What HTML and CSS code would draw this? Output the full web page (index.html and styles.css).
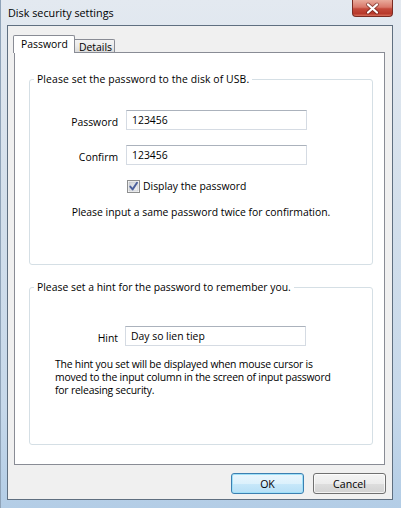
FILE: index.html
```html
<!DOCTYPE html>
<html>
<head>
<meta charset="utf-8">
<title>Disk security settings</title>
<link rel="stylesheet" href="styles.css">
</head>
<body>
<div class="window">
  <div class="titlebar">
    <span class="title">Disk security settings</span>
    <div class="close">
      <svg width="39" height="15" viewBox="0 0 39 15">
        <path d="M15 3.5 L24 11.5 M24 3.5 L15 11.5" stroke="#5a1a14" stroke-width="4" stroke-linecap="round" opacity="0.55"/>
        <path d="M15 3.5 L24 11.5 M24 3.5 L15 11.5" stroke="#ffffff" stroke-width="2.2" stroke-linecap="round"/>
      </svg>
    </div>
  </div>
  <div class="client">
    <div class="tabs">
      <div class="tab active">Password</div>
      <div class="tab">Details</div>
    </div>
    <div class="panel">
      <div class="group g1">
        <div class="legend">Please set the password to the disk of USB.</div>
        <div class="form form-pw">
          <span class="lbl">Password</span><div class="input">123456</div>
          <span class="lbl">Confirm</span><div class="input">123456</div>
        </div>
        <div class="check">
          <svg class="box" width="13" height="13" viewBox="0 0 13 13">
            <defs>
              <linearGradient id="cb" x1="0" y1="0" x2="1" y2="1">
                <stop offset="0" stop-color="#cfd3d8"/>
                <stop offset="1" stop-color="#f4f5f6"/>
              </linearGradient>
            </defs>
            <rect x="0.5" y="0.5" width="12" height="12" fill="#fdfdfd" stroke="#8e8f8f"/>
            <rect x="2" y="2" width="9" height="9" fill="url(#cb)" stroke="#b9bdc3" stroke-width="0.6"/>
            <path d="M3.3 6.6 L5.6 9.4 L10 2.8" fill="none" stroke="#4a5f9c" stroke-width="1.9" stroke-linecap="round" stroke-linejoin="round"/>
          </svg>
          <span>Display the password</span>
        </div>
        <p class="note">Please input a same password twice for confirmation.</p>
      </div>
      <div class="group g2">
        <div class="legend">Please set a hint for the password to remember you.</div>
        <div class="form form-hint">
          <span class="lbl">Hint</span><div class="input">Day so lien tiep</div>
        </div>
        <p class="help">The hint you set will be displayed when mouse cursor is<br>moved to the input column in the screen of input password<br>for releasing security.</p>
      </div>
    </div>
    <div class="buttons">
      <button class="btn default">OK</button>
      <button class="btn">Cancel</button>
    </div>
  </div>
</div>
</body>
</html>
```
FILE: styles.css
```css
* { box-sizing: border-box; }
html, body { margin: 0; padding: 0; }
body {
  width: 401px;
  height: 508px;
  overflow: hidden;
  font-family: "Open Sans", "Noto Sans", sans-serif;
  font-size: 10.4px;
  color: #000;
}
.window {
  width: 401px;
  height: 508px;
  padding: 0 8px 8px 6px;
  display: flex;
  flex-direction: column;
  background: linear-gradient(to bottom, #e3e9f0 0%, #d3dfeb 40%, #c6d8ea 80%, #b3cde6 100%);
  border-left: 1px solid #8fa3b8;
}
.titlebar {
  height: 25px;
  display: flex;
  justify-content: space-between;
  align-items: flex-start;
  flex: none;
}
.title {
  line-height: 26px;
  padding-left: 1px;
  font-size: 10.8px;
  color: #000;
}
.close {
  width: 41px;
  height: 17px;
  border: 1px solid #7a2b22;
  border-top: none;
  border-radius: 0 0 4px 4px;
  background: linear-gradient(to bottom, #e9ab9c 0%, #d9786a 45%, #c44a3b 55%, #b8392b 85%, #d7705d 100%);
  display: flex;
  align-items: center;
  justify-content: center;
}
.client {
  flex: 1;
  border: 1px solid #5f6f80;
  background: #f0f0f0;
  display: flex;
  flex-direction: column;
}
.tabs {
  height: 26px;
  padding: 9px 0 0 5px;
  display: flex;
  align-items: flex-end;
  flex: none;
}
.tab {
  border: 1px solid #898c95;
  border-bottom: none;
  color: #000;
  white-space: nowrap;
}
.tab.active {
  width: 62px;
  height: 18px;
  margin-bottom: -1px;
  position: relative;
  z-index: 1;
  background: #ffffff;
  padding: 1px 0 0 7px;
  line-height: 15px;
  border-radius: 2px 2px 0 0;
}
.tab:not(.active) {
  width: 40px;
  height: 13px;
  border-left: none;
  background: linear-gradient(to bottom, #f3f3f3 0%, #ebebeb 50%, #dcdcdc 100%);
  padding: 0 0 0 4px;
  line-height: 15px;
  border-radius: 0 2px 0 0;
}
.panel {
  height: 413px;
  margin: 0 7px 0 6px;
  background: #ffffff;
  border: 1px solid #898c95;
  padding: 26px 11px 0 14px;
  flex: none;
}
.group {
  border: 1px solid #d5dfe5;
  border-radius: 3px;
}
.g1 { height: 186px; }
.g2 { height: 158px; margin-top: 22px; }
.legend {
  display: block;
  width: max-content;
  margin: -8px 0 0 4px;
  padding: 0 3px;
  background: #ffffff;
  line-height: 15px;
}
.g1 .legend { letter-spacing: 0.1px; }
.form {
  display: grid;
  grid-template-columns: 88px 181px;
  grid-auto-rows: 20px;
  column-gap: 8px;
  row-gap: 15px;
  align-items: center;
}
.form-pw { margin-top: 23px; }
.form-hint { margin-top: 31px; column-gap: 7px; }
.lbl {
  text-align: right;
  line-height: 15px;
  padding-top: 4px;
}
.input {
  height: 20px;
  border: 1px solid #d5dbe3;
  border-top-color: #abb2bc;
  background: #ffffff;
  padding: 0 0 0 5px;
  line-height: 18px;
}
.check {
  margin: 15px 0 0 97px;
  height: 13px;
  display: flex;
  align-items: center;
  gap: 3px;
  line-height: 13px;
}
.check .box { flex: none; }
.note {
  margin: 12px 0 0;
  text-align: center;
  line-height: 15px;
}
.help {
  margin: 12px 0 0 25px;
  line-height: 13px;
  letter-spacing: -0.2px;
}
.buttons {
  display: flex;
  justify-content: flex-end;
  gap: 9px;
  margin: 8px 6px 0 0;
}
.btn {
  width: 73px;
  height: 21px;
  border-radius: 3px;
  font-family: "Open Sans", "Noto Sans", sans-serif;
  font-size: 10.6px;
  color: #000;
  padding: 0;
  line-height: 18px;
  border: 1px solid #707070;
  background: linear-gradient(to bottom, #f4f4f4 0%, #ececec 50%, #dedede 51%, #d2d2d2 100%);
  box-shadow: inset 0 0 0 1px rgba(255,255,255,0.7);
}
.btn.default {
  border-color: #3c7fb1;
  background: linear-gradient(to bottom, #eaf6fd 0%, #dcf1fc 50%, #c8e8fa 51%, #b6dff6 100%);
  box-shadow: inset 0 0 0 1px #9fe0f8;
}
```
